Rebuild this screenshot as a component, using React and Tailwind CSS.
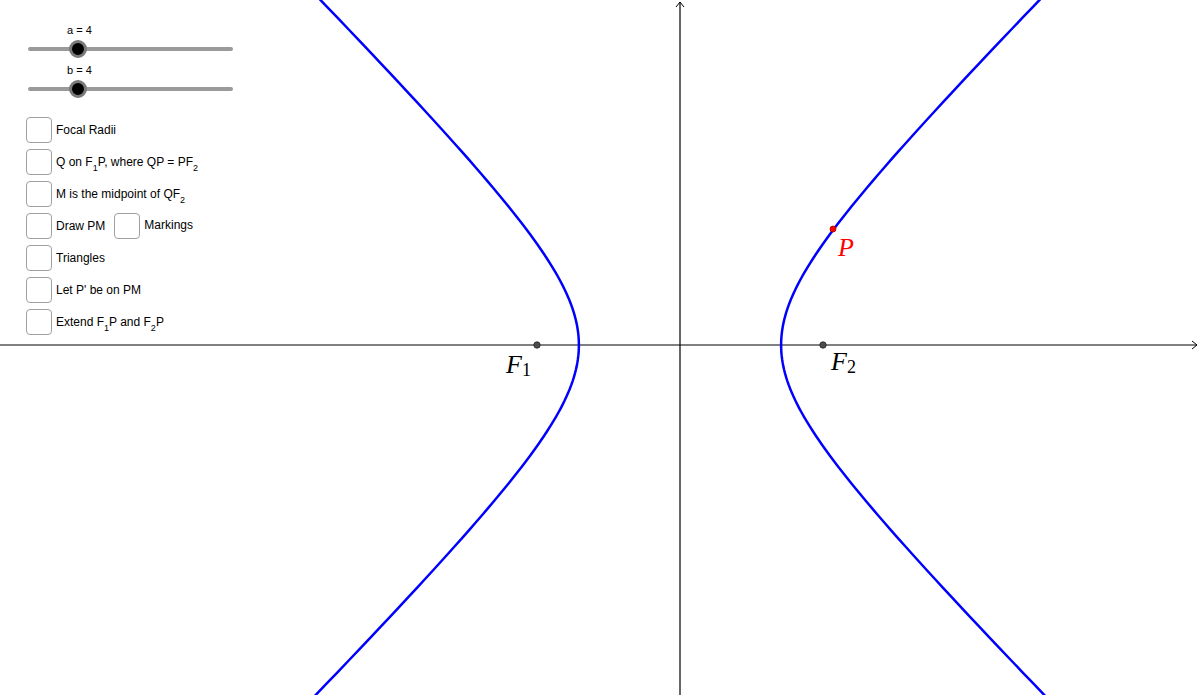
import React from 'react';

const OX = 680;
const OY = 345;
const S = 143 / Math.sqrt(32);
const A = 4;
const B = 4;

function branch(sign) {
    const pts = [];
    for (let i = -60; i <= 60; i++) {
        const t = (i / 60) * 2.1;
        const x = sign * A * Math.cosh(t);
        const y = B * Math.sinh(t);
        pts.push(`${(OX + S * x).toFixed(2)},${(OY - S * y).toFixed(2)}`);
    }
    return 'M' + pts.join(' L');
}

function Slider({label}) {
    return (
        <div className="flex flex-col">
            <div className="h-[20px] pl-[67px] pb-[3px] flex items-end text-[11px] leading-none">{label}</div>
            <div className="relative h-[20px] w-[205px] ml-[28px]">
                <div className="absolute left-0 right-0 top-[8px] h-[4px] rounded-full bg-[#9a9a9a]"/>
                <div
                    className="absolute left-[41px] top-[1px] w-[18px] h-[18px] rounded-full bg-black border-[3px] border-[#7a7a7a]"/>
            </div>
        </div>
    );
}

function Box() {
    return <div className="w-[26px] h-[26px] shrink-0 rounded-[4px] border border-[#a0a0a0] bg-white"/>;
}

function Row({children}) {
    return (
        <div className="flex items-center gap-[4px] h-[26px] text-[12px] leading-none">
            {children}
        </div>
    );
}

function Sub({children}) {
    return <sub className="text-[9px] bottom-[-5px]">{children}</sub>;
}

export default function App() {
    return (
        <div className="relative w-[1200px] h-[695px] bg-white overflow-hidden"
             style={{fontFamily: '"Liberation Sans", Arial, sans-serif'}}>
            <svg className="absolute inset-0" width="1200" height="695" viewBox="0 0 1200 695">
                <line x1="0" y1={OY} x2="1197" y2={OY} stroke="#000" strokeWidth="1"/>
                <path d="M1192 341 L1197 345 L1192 349" fill="none" stroke="#000" strokeWidth="1"/>
                <line x1={OX} y1="2" x2={OX} y2="695" stroke="#000" strokeWidth="1.2"/>
                <path d="M676 7 L680 2 L684 7" fill="none" stroke="#000" strokeWidth="1"/>

                <path d={branch(1)} fill="none" stroke="#0000ff" strokeWidth="2.5"/>
                <path d={branch(-1)} fill="none" stroke="#0000ff" strokeWidth="2.5"/>

                <circle cx="537" cy={OY} r="3.2" fill="#4d4d4d" stroke="#222" strokeWidth="0.8"/>
                <circle cx="823" cy={OY} r="3.2" fill="#4d4d4d" stroke="#222" strokeWidth="0.8"/>
                <circle cx="833" cy="229" r="3" fill="#ff0000" stroke="#a00000" strokeWidth="0.8"/>

                <text x="506" y="373" fontFamily='"Liberation Serif", serif' fontStyle="italic" fontSize="26"
                      fill="#000">F
                    <tspan fontStyle="normal" fontSize="18" dy="3">1</tspan>
                </text>
                <text x="831" y="370" fontFamily='"Liberation Serif", serif' fontStyle="italic" fontSize="26"
                      fill="#000">F
                    <tspan fontStyle="normal" fontSize="18" dy="3">2</tspan>
                </text>
                <text x="838" y="256" fontFamily='"Liberation Serif", serif' fontStyle="italic" fontSize="26"
                      fill="#ff0000">P
                </text>
            </svg>

            <div className="absolute left-0 top-0 flex flex-col text-black">
                <div className="pt-[19px] flex flex-col">
                    <Slider label="a = 4"/>
                    <Slider label="b = 4"/>
                </div>
                <div className="flex flex-col gap-[6px] pl-[26px] pt-[18px]">
                    <Row><Box/><span>Focal Radii</span></Row>
                    <Row><Box/><span>Q on F<Sub>1</Sub>P, where QP = PF<Sub>2</Sub></span></Row>
                    <Row><Box/><span>M is the midpoint of QF<Sub>2</Sub></span></Row>
                    <Row>
                        <Box/><span>Draw PM</span>
                        <span className="w-[1px]"/>
                        <Box/><span className="-mt-[2px]">Markings</span>
                    </Row>
                    <Row><Box/><span>Triangles</span></Row>
                    <Row><Box/><span>Let P' be on PM</span></Row>
                    <Row><Box/><span>Extend F<Sub>1</Sub>P and F<Sub>2</Sub>P</span></Row>
                </div>
            </div>
        </div>
    );
}
